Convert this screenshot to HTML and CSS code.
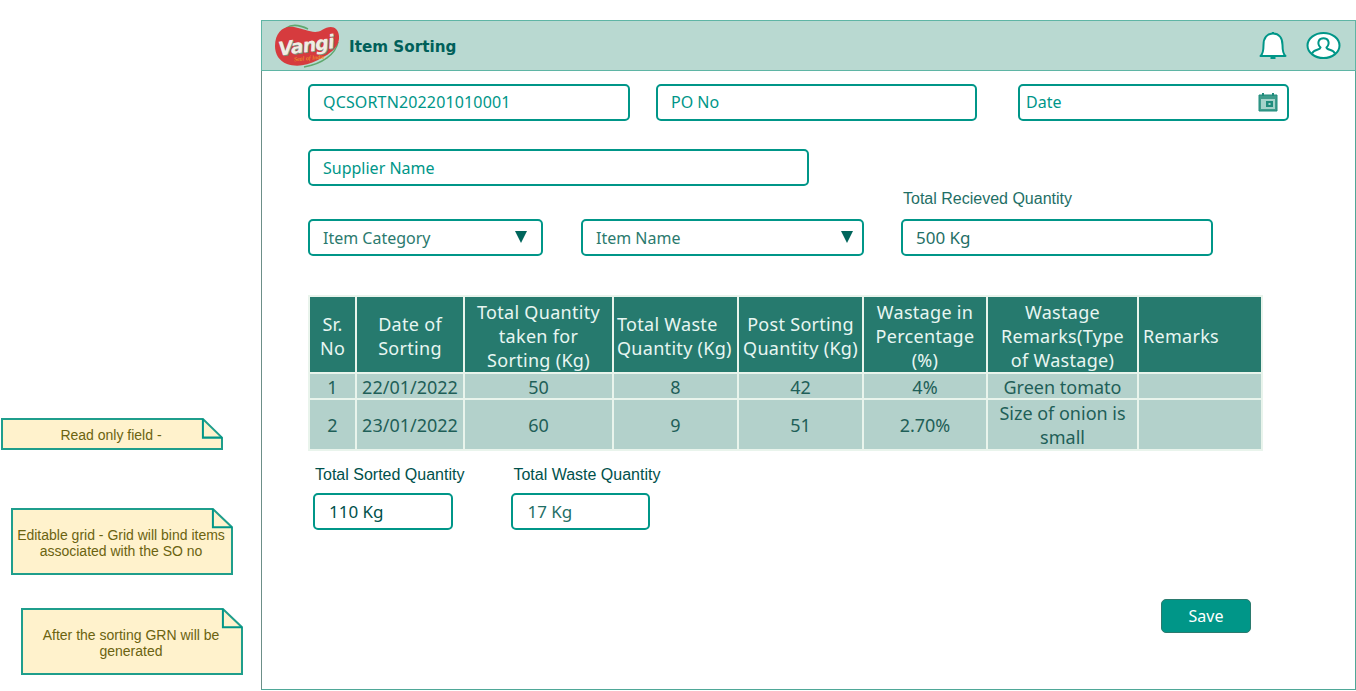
FILE: index.html
```html
<!DOCTYPE html>
<html lang="en">
<head>
    <meta charset="UTF-8">
    <meta name="viewport" content="width=device-width, initial-scale=1.0">
    <title>Item Sorting</title>
    <link rel="stylesheet" href="styles.css">
</head>
<body>
    <div class="canvas">
        <aside class="notes">
            <div class="note note-first">
                <svg class="note-shape" viewBox="0 0 221 31" preserveAspectRatio="none"><path d="M1 1H201L220 19V30H1Z" fill="#fff2cc" stroke="#1f9e8c" stroke-width="2"/><path d="M201 1V19H220" fill="none" stroke="#009688" stroke-width="2"/></svg>
                <p>Read only field -</p>
            </div>
            <div class="note note-second">
                <svg class="note-shape" viewBox="0 0 221 66" preserveAspectRatio="none"><path d="M1 1H201L220 19V65H1Z" fill="#fff2cc" stroke="#1f9e8c" stroke-width="2"/><path d="M201 1V19H220" fill="none" stroke="#009688" stroke-width="2"/></svg>
                <p>Editable grid - Grid will bind items associated with the SO no</p>
            </div>
            <div class="note note-third">
                <svg class="note-shape" viewBox="0 0 221 66" preserveAspectRatio="none"><path d="M1 1H201L220 19V65H1Z" fill="#fff2cc" stroke="#1f9e8c" stroke-width="2"/><path d="M201 1V19H220" fill="none" stroke="#009688" stroke-width="2"/></svg>
                <p>After the sorting GRN will be generated</p>
            </div>
        </aside>

        <main class="frame">
            <header class="topbar">
                <div class="logo">
                    <svg class="logo-shape" viewBox="0 0 66 44"><path d="M12 4C18 0 26 1 34 5" fill="none" stroke="#5fa86f" stroke-width="1.500"/><path d="M64 18C62 30 48 40 30 43" fill="none" stroke="#5fa86f" stroke-width="1.500"/><path d="M1 22C1 8 10 1 20 3C32 5 40 11 48 6C56 1 64 2 65 12C66 24 54 31 44 36C32 42 22 43 13 40C5 37 1 30 1 22Z" fill="#d63b3e"/></svg>
                    <span class="logo-name">Vangi</span>
                    <span class="logo-tag">Seal of India</span>
                </div>
                <h1 class="page-title">Item Sorting</h1>
                <div class="topbar-icons">
                    <svg class="icon-bell" viewBox="0 0 28 29"><path d="M1.500 25C4 23 4.500 19.500 4.500 14C4.500 7 8 2.500 14 2.500C20 2.500 23.500 7 23.500 14C23.500 19.500 24 23 26.500 25Z" fill="#fff" stroke="#009688" stroke-width="2" stroke-linejoin="round"/><path d="M11.500 26H16.500V28H11.500Z" fill="#009688"/><path d="M13 1H15V3H13Z" fill="#009688"/></svg>
                    <svg class="icon-user" viewBox="0 0 35 27"><ellipse cx="17.500" cy="13.500" rx="16" ry="12.500" fill="#fff" stroke="#009688" stroke-width="2"/><path d="M6 21.500C8 17 14 18.500 14.500 15.500C12.500 13.500 12 10.500 13 8.500C14.500 5.500 20.500 5.500 22 8.500C23 10.500 22.500 13.500 20.500 15.500C21 18.500 27 17 29 21.500" fill="none" stroke="#009688" stroke-width="2"/></svg>
                </div>
            </header>

            <section class="form">
                <div class="form-row row-one">
                    <div class="field field-sortno">QCSORTN202201010001</div>
                    <div class="field field-po">PO No</div>
                    <div class="field field-date">
                        <span>Date</span>
                        <svg class="icon-cal" viewBox="0 0 20 20"><path d="M1 3H19V19H1Z" fill="#3f9c8c" stroke="#1f8c7c"/><path d="M4 1H6V4H4ZM14 1H16V4H14Z" fill="#1f8c7c"/><path d="M3 7H17V17H3Z" fill="#a5d3ca"/><path d="M8 9H15V15H8Z" fill="#1f8c7c"/><path d="M10.500 11H12.500V13H10.500Z" fill="#a5d3ca"/></svg>
                    </div>
                </div>
                <div class="form-row row-two">
                    <div class="field field-supplier">Supplier Name</div>
                </div>
                <div class="form-row row-three">
                    <div class="field field-select field-category">
                        <span>Item Category</span><span class="caret"></span>
                    </div>
                    <div class="field field-select field-item">
                        <span>Item Name</span><span class="caret"></span>
                    </div>
                    <div class="labelled field-received">
                        <label>Total Recieved Quantity</label>
                        <div class="field field-value">500 Kg</div>
                    </div>
                </div>
            </section>

            <table class="grid">
                <thead>
                    <tr>
                        <th class="c-sr">Sr.<br>No</th>
                        <th class="c-date">Date of<br>Sorting</th>
                        <th class="c-taken">Total Quantity<br>taken for<br>Sorting (Kg)</th>
                        <th class="c-waste">Total Waste<br>Quantity (Kg)</th>
                        <th class="c-post">Post Sorting<br>Quantity (Kg)</th>
                        <th class="c-pct">Wastage in<br>Percentage<br>(%)</th>
                        <th class="c-type">Wastage<br>Remarks(Type<br>of Wastage)</th>
                        <th class="c-remarks">Remarks</th>
                    </tr>
                </thead>
                <tbody>
                    <tr class="row-short">
                        <td>1</td><td>22/01/2022</td><td>50</td><td>8</td><td>42</td><td>4%</td><td>Green tomato</td><td></td>
                    </tr>
                    <tr class="row-tall">
                        <td>2</td><td>23/01/2022</td><td>60</td><td>9</td><td>51</td><td>2.70%</td><td>Size of onion is small</td><td></td>
                    </tr>
                </tbody>
            </table>

            <section class="totals">
                <div class="labelled total-sorted">
                    <label>Total Sorted Quantity</label>
                    <div class="field field-dark">110 Kg</div>
                </div>
                <div class="labelled total-waste">
                    <label>Total Waste Quantity</label>
                    <div class="field field-value">17 Kg</div>
                </div>
            </section>

            <div class="actions">
                <button class="save-btn">Save</button>
            </div>
        </main>
    </div>
</body>
</html>
```

FILE: styles.css
```css
* {
    box-sizing: border-box;
}

html,
body {
    margin: 0;
    height: 691px;
    overflow: hidden;
    background: #fff;
}

body {
    font-family: "Noto Sans", "DejaVu Sans", sans-serif;
}

.canvas {
    display: flex;
    height: 691px;
}

/* side notes */
.notes {
    width: 261px;
    flex: none;
}

.note {
    position: relative;
    width: 222px;
    display: flex;
    align-items: center;
    justify-content: center;
    text-align: center;
    font-family: "Liberation Sans", Arial, sans-serif;
    font-size: 14px;
    line-height: 16px;
    color: #6b6310;
}

.note p {
    position: relative;
    margin: 0;
    padding: 2px 6px 0 4px;
}

.note-shape {
    position: absolute;
    left: 0;
    top: 0;
    width: 100%;
    height: 100%;
}

.note-first {
    height: 32px;
    margin: 418px 0 0 1px;
}

.note-second {
    height: 67px;
    margin: 58px 0 0 11px;
}

.note-third {
    height: 67px;
    margin: 33px 0 0 21px;
}

/* main window */
.frame {
    width: 1095px;
    height: 670px;
    margin-top: 20px;
    border: 1px solid #7f9a94;
    border-top: 0;
    border-right-color: #4fa898;
    border-bottom-color: #4fa898;
    border-left-color: #6c8f88;
    display: flex;
    flex-direction: column;
}

.topbar {
    height: 51px;
    flex: none;
    display: flex;
    align-items: center;
    margin-left: -1px;
    margin-right: -1px;
    padding: 0 14px 0 12px;
    background: #b9d9d1;
    border: 1px solid #5fb5a5;
}

.logo {
    position: relative;
    width: 66px;
    height: 44px;
    flex: none;
}

.logo-shape {
    display: block;
    width: 66px;
    height: 44px;
}

.logo-name {
    position: absolute;
    left: 4px;
    top: 10px;
    font-family: "DejaVu Sans", sans-serif;
    font-size: 19px;
    line-height: 22px;
    font-weight: 700;
    font-style: italic;
    letter-spacing: -0.8px;
    color: #f0ede4;
    text-shadow: 1px 1px 0 #7a8f80;
    transform: rotate(-8deg);
}

.logo-tag {
    position: absolute;
    left: 20px;
    top: 31px;
    font-family: "Liberation Serif", serif;
    font-style: italic;
    font-size: 6px;
    line-height: 6px;
    white-space: nowrap;
    color: #f5a623;
    transform: rotate(-5deg);
}

.page-title {
    margin: 2px 0 0 9px;
    font-family: "DejaVu Sans", sans-serif;
    font-size: 15.2px;
    font-weight: 700;
    color: #00605a;
}

.topbar-icons {
    margin-left: auto;
    display: flex;
    align-items: center;
    gap: 19px;
}

.icon-bell {
    width: 28px;
    height: 29px;
}

.icon-user {
    width: 35px;
    height: 27px;
}

/* form */
.form {
    height: 185px;
    flex: none;
    padding-top: 13px;
    padding-left: 46px;
}

.form-row {
    display: flex;
}

.row-one .field {
    padding-bottom: 2px;
}

.row-two {
    margin-top: 28px;
}

.row-three {
    margin-top: 5px;
    align-items: flex-end;
}

.field {
    height: 37px;
    display: flex;
    align-items: center;
    padding-left: 13px;
    border: 2px solid #009688;
    border-radius: 5px;
    background: #fff;
    font-size: 16px;
    color: #009688;
}

.field-sortno {
    width: 322px;
    letter-spacing: 0.15px;
}

.field-po {
    width: 321px;
    margin-left: 26px;
}

.field-date {
    width: 271px;
    margin-left: 41px;
    padding-left: 6px;
    justify-content: space-between;
    padding-right: 9px;
}

.icon-cal {
    width: 20px;
    height: 20px;
}

.field-supplier {
    width: 501px;
}

.field-select {
    justify-content: space-between;
    color: #2b7a6e;
}

.field-category {
    width: 235px;
    padding-right: 14px;
}

.field-item {
    width: 283px;
    margin-left: 38px;
    padding-right: 9px;
}

.caret {
    width: 0;
    height: 0;
    margin-bottom: 1px;
    border-left: 6px solid transparent;
    border-right: 6px solid transparent;
    border-top: 12px solid #00665c;
}

.labelled label {
    display: block;
    font-family: "Liberation Sans", Arial, sans-serif;
    font-size: 16px;
    line-height: 16px;
    color: #1f6f66;
}

.field-received {
    margin-left: 37px;
}

.field-received label {
    margin-bottom: 12px;
    padding-left: 2px;
}

.field-received .field {
    width: 312px;
}

.field-value {
    font-size: 17px;
    color: #1f6f66;
}

.field-dark {
    font-size: 17px;
    color: #00514b;
}

/* grid */
.grid {
    flex: none;
    width: 955px;
    margin-left: 46px;
    margin-top: 39px;
    border-collapse: separate;
    border-spacing: 2px;
    table-layout: fixed;
    background: #e9f4ec;
    font-size: 18px;
}

.grid th {
    height: 75px;
    padding: 3px 0 0;
    font-weight: 400;
    line-height: 24px;
    letter-spacing: 0.3px;
    white-space: nowrap;
    background: #267a6e;
    color: #e8f6f2;
    overflow: hidden;
}

.grid td {
    padding: 2px 0 0;
    text-align: center;
    background: #b3d1cb;
    color: #1f5f58;
}

.row-short td {
    height: 24px;
    line-height: 22px;
}

.row-tall td {
    height: 49px;
    line-height: 23.5px;
}

.c-sr { width: 45px; }
.c-date { width: 106px; }
.c-taken { width: 147px; }
.c-waste { width: 123px; }
.c-post { width: 123px; }
.c-pct { width: 122px; }
.c-type { width: 149px; }

.grid .c-waste {
    text-align: left;
    padding-left: 3px;
}

.grid .c-remarks {
    text-align: left;
    padding-left: 4px;
}

/* totals */
.totals {
    display: flex;
    flex: none;
    margin-top: 16px;
    margin-left: 51px;
}

.totals label {
    margin-bottom: 10px;
    padding-left: 2px;
    color: #00514b;
}

.totals .field {
    height: 37px;
    padding-left: 14px;
}

.total-sorted .field {
    width: 140px;
}

.total-waste {
    margin-left: 47px;
}

.total-waste .field {
    width: 139px;
}

.actions {
    display: flex;
    justify-content: flex-end;
    margin-top: 69px;
    padding-right: 104px;
}

.save-btn {
    width: 90px;
    height: 34px;
    padding: 0;
    border: 1px solid #2b7a6e;
    border-radius: 5px;
    background: #009688;
    color: #fff;
    font-family: "Noto Sans", sans-serif;
    font-size: 16px;
}
```
